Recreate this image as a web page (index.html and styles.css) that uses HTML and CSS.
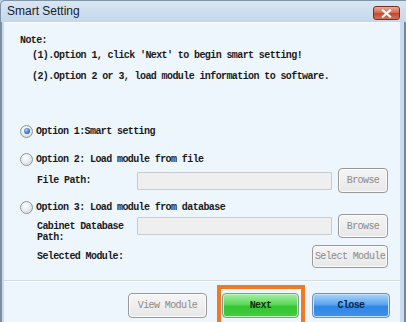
FILE: index.html
```html
<!DOCTYPE html>
<html lang="en">
	<head>
		<title>Smart Setting</title>
		<meta charset="UTF-8">
		<link rel="stylesheet" href="styles.css">
	</head>
	<body>
		<div class="window">
			<div class="titlebar">
				<span class="title">Smart Setting</span>
				<span class="closeX">
					<svg width="11" height="9" viewBox="0 0 11 9"><path d="M2 1.5 L9 7.5 M9 1.5 L2 7.5" stroke="#fff" stroke-width="2.2" stroke-linecap="square"/></svg>
				</span>
			</div>
			<div class="frame">
				<div class="client">
					<div class="note">
						<div class="noteHead">Note:</div>
						<div class="noteLine first">(1).Option 1, click 'Next' to begin smart setting!</div>
						<div class="noteLine second">(2).Option 2 or 3, load module information to software.</div>
					</div>

					<div class="option opt1"><span class="radio checked"></span>Option 1:Smart setting</div>

					<div class="option opt2"><span class="radio"></span>Option 2: Load module from file</div>
					<div class="fieldRow fileRow">
						<span class="label">File Path:</span>
						<span class="input"></span>
						<span class="btn off browse">Browse</span>
					</div>

					<div class="option opt3"><span class="radio"></span>Option 3: Load module from database</div>
					<div class="fieldRow dbRow">
						<span class="label twoLine">Cabinet Database<br>Path:</span>
						<span class="input"></span>
						<span class="btn off browse">Browse</span>
					</div>
					<div class="fieldRow modRow">
						<span class="label">Selected Module:</span>
						<span class="btn off selMod">Select Module</span>
					</div>

					<div class="sep"></div>

					<div class="footer">
						<span class="btn off viewMod">View Module</span>
						<span class="hilite"><span class="btn next">Next</span></span>
						<span class="btn closeBtn">Close</span>
					</div>
				</div>
			</div>
		</div>
	</body>
</html>
```

FILE: styles.css
```css
html,body{margin:0;padding:0;background:#fff;}
.window{width:406px;height:322px;display:flex;flex-direction:column;overflow:hidden;background:#bcd2e8;}
.titlebar{height:22px;flex:none;display:flex;align-items:flex-start;justify-content:space-between;
	background:linear-gradient(#d9e6f3,#c3d7ec);border-top:1px solid #8193a6;border-left:1px solid #8193a6;
	border-top-left-radius:5px;box-sizing:border-box;}
.title{font-family:"Liberation Sans",Arial,sans-serif;font-size:12px;color:#17212d;margin:3px 0 0 6px;}
.closeX{width:25px;height:12px;margin:5px 6px 0 0;border:1px solid #6e3325;border-radius:3px;
	background:linear-gradient(#eaa897,#d66e55 45%,#c4472c 55%,#d7735a);display:flex;align-items:center;justify-content:center;}
.frame{flex:1;display:flex;border-left:2px solid #7f8e9e;padding-left:2px;background:#c9dbee;
	border-right:2px solid #6f8aa3;padding-right:4px;}
.client{flex:1;background:#eef6fd;border-top:1px solid #f7fbff;display:flex;flex-direction:column;
	font-family:"Liberation Mono","Courier New",monospace;font-size:10px;letter-spacing:-0.6px;font-weight:bold;color:#1a1a1a;}
.note{padding:12px 0 0 16px;}
.noteHead,.noteLine{line-height:12px;}
.noteLine{padding-left:12px;}
.noteLine.first{margin-top:3px;}
.noteLine.second{margin-top:9px;}
.option{display:flex;align-items:center;height:12px;padding-left:16px;}
.opt1{margin-top:42px;}
.opt2{margin-top:16px;}
.opt3{margin-top:8px;}
.radio{width:11px;height:11px;border-radius:50%;border:1px solid #8e959c;margin-right:3px;flex:none;
	background:radial-gradient(circle at 40% 35%,#ffffff,#d0d4d8);display:flex;align-items:center;justify-content:center;}
.radio.checked::after{content:"";width:6px;height:6px;border-radius:50%;background:radial-gradient(circle at 40% 35%,#9fd0ff,#2a64b0 70%);}
.fieldRow{display:flex;align-items:center;padding:0 12px 0 33px;}
.label{width:100px;flex:none;line-height:11px;}
.label.twoLine{align-self:flex-start;margin-top:7px;}
.input{width:193px;height:16px;border:1px solid #c9cbce;border-radius:1px;background:#efefef;margin-right:6px;}
.btn{display:flex;align-items:center;justify-content:center;box-sizing:border-box;border-radius:4px;}
.off{border:1px solid #999;background:linear-gradient(#f5f5f5,#e8e8e8);color:#8a8a8a;font-weight:normal;
	box-shadow:inset 0 0 0 1px #fbfbfb;}
.browse{width:50px;height:25px;}
.fileRow{margin-top:3px;}
.dbRow{margin-top:1px;height:24px;}
.dbRow .browse{height:24px;}
.modRow{margin-top:7px;justify-content:space-between;}
.selMod{width:76px;height:23px;}
.sep{margin-top:12px;height:1px;background:#d3dbe3;border-bottom:1px solid #ffffff;}
.footer{display:flex;justify-content:flex-end;align-items:flex-start;padding-right:10px;margin-top:3px;}
.viewMod{width:79px;height:25px;margin-top:8px;margin-right:10px;}
.hilite{border:4px solid #f07a22;border-bottom:none;padding:4px 2px 10px 1px;margin-right:7px;}
.next{width:77px;height:25px;border:1px solid #8a9a8a;background:linear-gradient(#a8eea4,#5cd85a 45%,#34c432 55%,#44cc40);
	color:#12300f;box-shadow:inset 0 0 0 1px #c4f4c0;}
.closeBtn{width:78px;height:25px;margin-top:8px;border:1px solid #7d8ea3;background:linear-gradient(#a9d4fa,#5aa6ef 45%,#2f86e6 55%,#3f92ea);
	color:#0c2450;box-shadow:inset 0 0 0 1px #c5e2fc;}
```
